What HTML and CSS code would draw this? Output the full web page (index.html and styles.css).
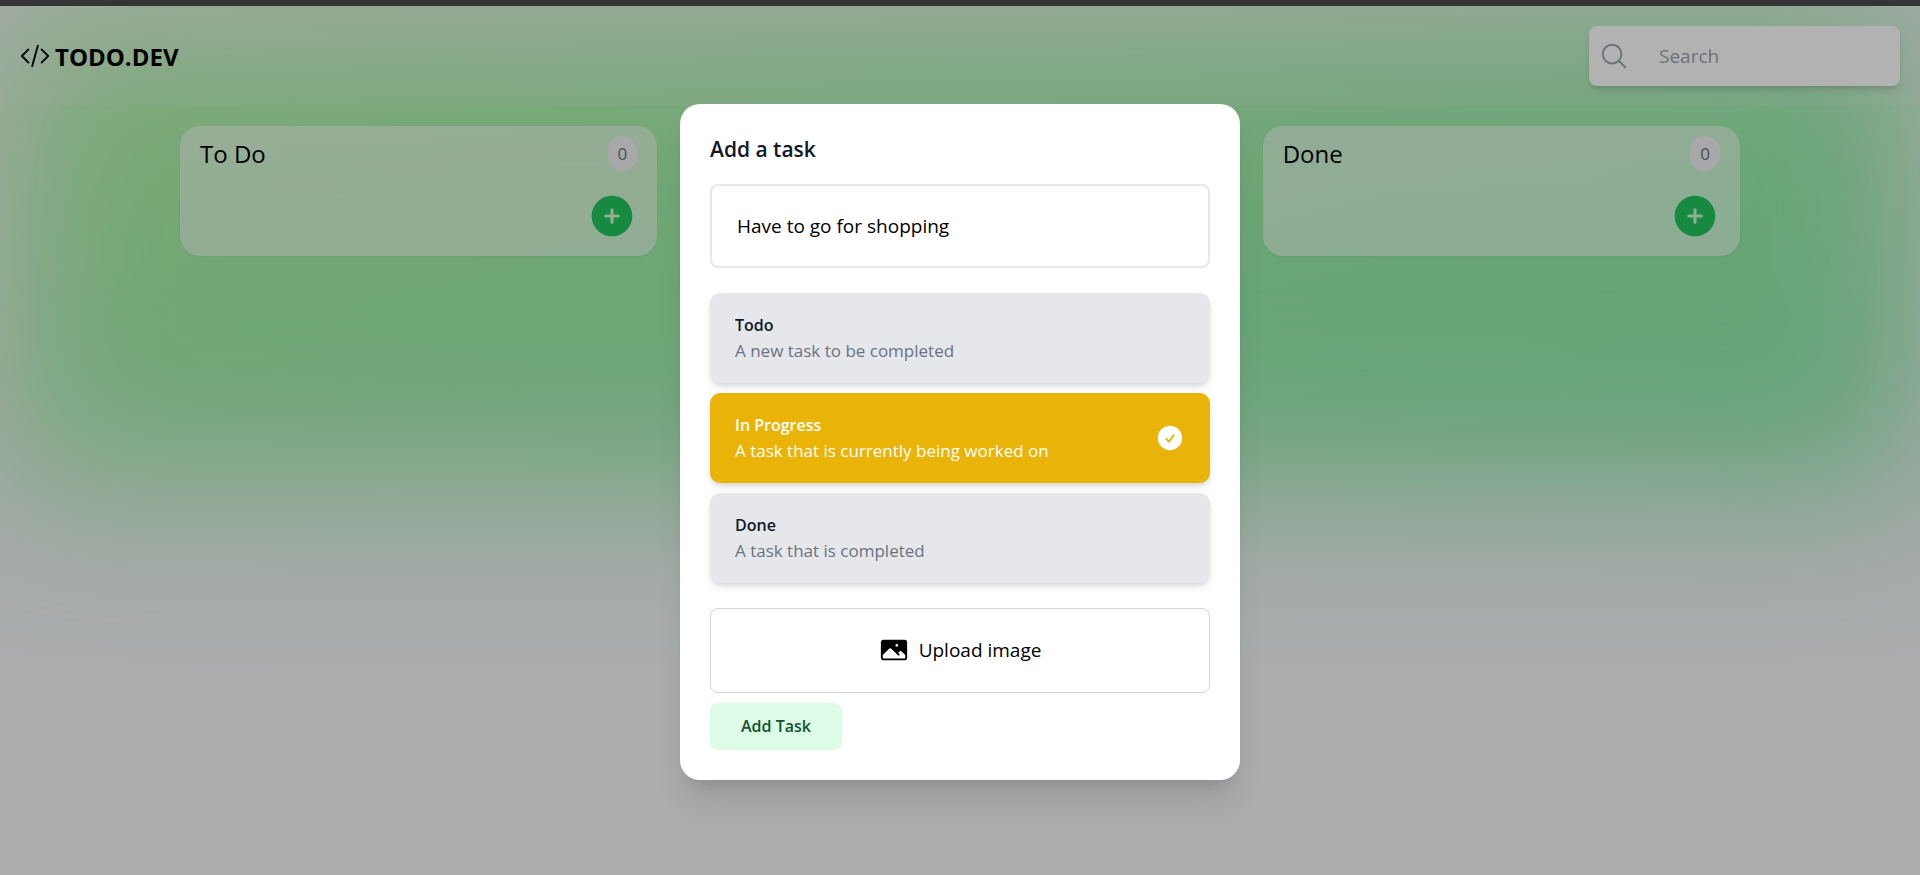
FILE: index.html
```html
<!DOCTYPE html>
<html lang="en">
<head>
  <meta charset="UTF-8">
  <meta name="viewport" content="width=device-width, initial-scale=1.0">
  <title>TODO.DEV</title>
  <link rel="stylesheet" href="styles.css">
</head>
<body>

<div class="top-strip"></div>

<div class="page">
  <div class="glow"></div>

  <header class="header">
    <a href="#" class="logo">
      <svg class="icon" viewBox="0 0 24 24" fill="none" stroke="currentColor" stroke-width="1.5" stroke-linecap="round" stroke-linejoin="round">
        <path d="M17.25 6.75L22.5 12l-5.25 5.25m-10.5 0L1.5 12l5.25-5.25m7.5-3l-4.5 16.5"/>
      </svg>
      <span>TODO.DEV</span>
    </a>

    <form class="search">
      <svg class="icon" viewBox="0 0 24 24" fill="none" stroke="currentColor" stroke-width="1.5" stroke-linecap="round" stroke-linejoin="round">
        <path d="M21 21l-5.197-5.197m0 0A7.5 7.5 0 105.196 5.196a7.5 7.5 0 0010.607 10.607z"/>
      </svg>
      <input type="text" class="search-input" placeholder="Search" aria-label="Search">
    </form>
  </header>

  <main class="board">
    <section class="column">
      <div class="column-header">
        <h2>To Do</h2>
        <span class="count">0</span>
      </div>
      <button type="button" class="add-button" aria-label="Add task to To Do">
        <svg viewBox="0 0 24 24" fill="currentColor">
          <path fill-rule="evenodd" d="M12 2.25c-5.385 0-9.75 4.365-9.75 9.75s4.365 9.75 9.75 9.75 9.75-4.365 9.75-9.75S17.385 2.25 12 2.25zM12.75 9a.75.75 0 00-1.5 0v2.25H9a.75.75 0 000 1.5h2.25V15a.75.75 0 001.5 0v-2.25H15a.75.75 0 000-1.5h-2.25V9z" clip-rule="evenodd"/>
        </svg>
      </button>
    </section>

    <section class="column"></section>

    <section class="column">
      <div class="column-header">
        <h2>Done</h2>
        <span class="count">0</span>
      </div>
      <button type="button" class="add-button" aria-label="Add task to Done">
        <svg viewBox="0 0 24 24" fill="currentColor">
          <path fill-rule="evenodd" d="M12 2.25c-5.385 0-9.75 4.365-9.75 9.75s4.365 9.75 9.75 9.75 9.75-4.365 9.75-9.75S17.385 2.25 12 2.25zM12.75 9a.75.75 0 00-1.5 0v2.25H9a.75.75 0 000 1.5h2.25V15a.75.75 0 001.5 0v-2.25H15a.75.75 0 000-1.5h-2.25V9z" clip-rule="evenodd"/>
        </svg>
      </button>
    </section>
  </main>

  <div class="overlay">
    <form class="modal" role="dialog" aria-labelledby="modal-title">
      <h3 id="modal-title" class="modal-title">Add a task</h3>

      <input type="text" class="task-input" value="Have to go for shopping" aria-label="Task">

      <div class="task-types">
        <label class="task-type">
          <input type="radio" name="type" value="todo">
          <span class="task-text">
            <span class="task-name">Todo</span>
            <span class="task-description">A new task to be completed</span>
          </span>
        </label>
        <label class="task-type">
          <input type="radio" name="type" value="inprogress" checked>
          <span class="task-text">
            <span class="task-name">In Progress</span>
            <span class="task-description">A task that is currently being worked on</span>
          </span>
          <svg class="icon" viewBox="0 0 24 24" fill="currentColor">
            <path fill-rule="evenodd" d="M2.25 12c0-5.385 4.365-9.75 9.75-9.75s9.75 4.365 9.75 9.75-4.365 9.75-9.75 9.75S2.25 17.385 2.25 12zm13.36-1.814a.75.75 0 10-1.22-.872l-3.236 4.53L9.53 12.22a.75.75 0 00-1.06 1.06l2.25 2.25a.75.75 0 001.14-.094l3.75-5.25z" clip-rule="evenodd"/>
          </svg>
        </label>
        <label class="task-type">
          <input type="radio" name="type" value="done">
          <span class="task-text">
            <span class="task-name">Done</span>
            <span class="task-description">A task that is completed</span>
          </span>
        </label>
      </div>

      <button type="button" class="upload-button">
        <svg class="icon" viewBox="0 0 24 24" fill="currentColor">
          <path fill-rule="evenodd" d="M1.5 6a2.25 2.25 0 012.25-2.25h16.5A2.25 2.25 0 0122.5 6v12a2.25 2.25 0 01-2.25 2.25H3.75A2.25 2.25 0 011.5 18V6zM3 16.06V18c0 .414.336.75.75.75h16.5A.75.75 0 0021 18v-1.94l-2.69-2.689a1.5 1.5 0 00-2.12 0l-.88.879.97.97a.75.75 0 11-1.06 1.06l-5.16-5.159a1.5 1.5 0 00-2.12 0L3 16.061zm10.125-7.81a1.125 1.125 0 112.25 0 1.125 1.125 0 01-2.25 0z" clip-rule="evenodd"/>
        </svg>
        Upload image
      </button>

      <button type="submit" class="submit-button">Add Task</button>
    </form>
  </div>
</div>

</body>
</html>
```

FILE: styles.css
```css
* {
  box-sizing: border-box;
}

body {
  margin: 0;
  min-height: 100vh;
  display: flex;
  flex-direction: column;
  background-color: #f5f6f8;
  font-family: "Open Sans", "Noto Sans", sans-serif;
  font-size: 17px;
  line-height: 25px;
  color: #000;
}

h2,
h3 {
  margin: 0;
}

button,
input {
  font-family: inherit;
}

button {
  cursor: pointer;
}

.icon {
  width: 30px;
  height: 30px;
  flex-shrink: 0;
}

.top-strip {
  height: 6px;
  background-color: #353535;
}

.page {
  position: relative;
  flex: 1;
  overflow: hidden;
}

/* blurred green gradient behind the board */
.glow {
  position: absolute;
  top: 0;
  left: 0;
  width: 100%;
  height: 480px;
  background: linear-gradient(to bottom right, #74f45c, #18dc5a);
  filter: blur(80px);
  opacity: 0.5;
}

.header {
  position: relative;
  display: flex;
  align-items: center;
  justify-content: space-between;
  padding: 20px;
  background-color: rgba(245, 246, 248, 0.1);
}

.logo {
  display: flex;
  align-items: center;
  gap: 5px;
  font-size: 24px;
  font-weight: 700;
  color: #000;
  text-decoration: none;
}

.search {
  display: flex;
  align-items: center;
  gap: 25px;
  height: 60px;
  width: 311px;
  padding: 10px;
  background-color: #fff;
  border-radius: 8px;
  box-shadow: 0 5px 8px -1px rgba(0, 0, 0, 0.1), 0 3px 5px -2px rgba(0, 0, 0, 0.1);
  color: #9ca3af;
}

.search-input {
  flex: 1;
  min-width: 0;
  padding: 5px;
  border: none;
  outline: none;
  background: none;
  font-size: 19px;
}

.search-input::placeholder {
  color: #9ca3af;
}

.board {
  position: relative;
  display: grid;
  grid-template-columns: repeat(3, 1fr);
  gap: 64px;
  max-width: 1600px;
  margin: 0 auto;
  padding: 20px;
}

.column {
  padding: 10px 20px 15px;
  background-color: rgba(255, 255, 255, 0.5);
  border-radius: 20px;
  box-shadow: 0 1px 3px rgba(0, 0, 0, 0.05);
}

.column-header {
  display: flex;
  align-items: center;
  justify-content: space-between;
  margin-bottom: 20px;
}

.column-header h2 {
  font-size: 24px;
  font-weight: 500;
}

.count {
  padding: 5px 10px;
  background-color: #f1f0f4;
  border-radius: 18px;
  color: #6b7280;
}

.add-button {
  display: block;
  width: 50px;
  height: 50px;
  margin-left: auto;
  padding: 0;
  border: none;
  background: none;
  color: #22c55e;
}

.overlay {
  position: absolute;
  top: 0;
  left: 0;
  width: 100%;
  height: 100%;
  display: flex;
  align-items: center;
  justify-content: center;
  padding-top: 2px;
  background-color: rgba(0, 0, 0, 0.3);
}

.modal {
  width: 560px;
  padding: 30px;
  background-color: #fff;
  border-radius: 20px;
  box-shadow: 0 25px 31px -6px rgba(0, 0, 0, 0.1), 0 10px 13px -8px rgba(0, 0, 0, 0.1);
}

.modal-title {
  margin-bottom: 20px;
  font-size: 21px;
  font-weight: 600;
  line-height: 30px;
  color: #111827;
}

.task-input {
  display: block;
  width: 100%;
  height: 84px;
  padding: 20px 25px;
  border: 2px solid #e5e7eb;
  border-radius: 8px;
  outline: none;
  font-size: 19px;
}

.task-types {
  display: flex;
  flex-direction: column;
  gap: 10px;
  margin: 25px 0;
}

.task-type {
  display: flex;
  align-items: center;
  justify-content: space-between;
  padding: 20px 25px;
  background-color: #e5e7eb;
  border-radius: 10px;
  box-shadow: 0 5px 8px -1px rgba(0, 0, 0, 0.1), 0 3px 5px -2px rgba(0, 0, 0, 0.1);
  cursor: pointer;
}

.task-type input {
  position: absolute;
  opacity: 0;
}

.task-name,
.task-description {
  display: block;
}

.task-name {
  font-size: 16px;
  font-weight: 600;
  color: #111827;
}

.task-description {
  color: #6b7280;
}

.task-type:has(input:checked) {
  background-color: #eab308;
  color: #fff;
}

.task-type:has(input:checked) .task-name,
.task-type:has(input:checked) .task-description {
  color: #fff;
}

.upload-button {
  display: flex;
  align-items: center;
  justify-content: center;
  gap: 10px;
  width: 100%;
  height: 85px;
  margin-bottom: 10px;
  border: 1px solid #d1d5db;
  border-radius: 8px;
  background-color: #fff;
  color: #000;
  font-size: 19px;
}

.submit-button {
  display: block;
  padding: 11px 31px;
  border: none;
  border-radius: 8px;
  background-color: #dcfce7;
  color: #14532d;
  font-size: 16px;
  font-weight: 600;
  line-height: 25px;
}
```
